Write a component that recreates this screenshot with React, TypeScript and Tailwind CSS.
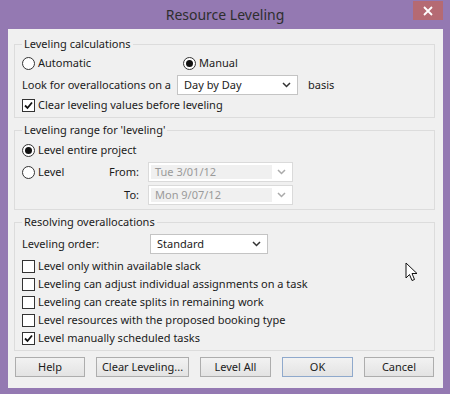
import React from "react"

const font = { fontFamily: '"Noto Sans", "Open Sans", sans-serif' }

const Radio = ({ checked, label }: { checked?: boolean; label: string }) => (
  <div className="flex items-center h-[18px]">
    <span className="w-[13px] h-[13px] rounded-full border border-[#333] bg-white flex items-center justify-center">
      {checked && <span className="w-[7px] h-[7px] rounded-full bg-[#111]" />}
    </span>
    <span className="ml-[3px]">{label}</span>
  </div>
)

const Check = ({ checked, label }: { checked?: boolean; label: string }) => (
  <div className="flex items-center h-[18px]">
    <span className="w-[13px] h-[13px] shrink-0 border border-[#333] bg-white flex items-center justify-center">
      {checked && (
        <svg width="9" height="9" viewBox="0 0 9 9">
          <path d="M1 4.5 L3.5 7 L8 1.5" fill="none" stroke="#111" strokeWidth="1.8" />
        </svg>
      )}
    </span>
    <span className="ml-[3px]">{label}</span>
  </div>
)

const Chevron = ({ color }: { color: string }) => (
  <svg width="9" height="6" viewBox="0 0 9 6">
    <path d="M1 1 L4.5 4.5 L8 1" fill="none" stroke={color} strokeWidth="1.5" />
  </svg>
)

const Select = ({ value, w }: { value: string; w: string }) => (
  <div className={`${w} h-[20px] bg-white border border-[#c4c4c4] flex items-center justify-between pl-[6px] pr-[6px]`}>
    <span>{value}</span>
    <Chevron color="#333" />
  </div>
)

const DateBox = ({ value }: { value: string }) => (
  <div className="w-[145px] h-[20px] bg-white border border-[#dadada] flex items-center p-[2px]">
    <div className="flex-1 h-full bg-[#f0f0f0] text-[#9a9a9a] pl-[4px] flex items-center">{value}</div>
    <div className="w-[18px] flex justify-center">
      <Chevron color="#aaa" />
    </div>
  </div>
)

const Btn = ({ label, w, primary }: { label: string; w: string; primary?: boolean }) => (
  <div
    className={`${w} h-[20px] flex items-center justify-center border bg-gradient-to-b from-[#f2f2f2] to-[#e3e3e3] ${
      primary ? "border-[#8fa9cc]" : "border-[#adadad]"
    }`}
  >
    {label}
  </div>
)

export default function App() {
  return (
    <div className="w-[450px] h-[394px] bg-[#9479b2] relative text-[11px] text-[#1b1b1b] whitespace-nowrap" style={font}>
      <div className="h-[29px] flex items-center justify-center relative">
        <span className="text-[14px] text-[#2e2e2e]">Resource Leveling</span>
        <div className="absolute right-[7px] top-[1px] w-[30px] h-[19px] bg-[#b56a73] flex items-center justify-center">
          <svg width="10" height="10" viewBox="0 0 10 10">
            <path d="M1 1 L9 9 M9 1 L1 9" stroke="#fff" strokeWidth="1.8" />
          </svg>
        </div>
      </div>
      <div className="ml-[8px] mr-[7px] h-[359px] bg-[#f0f0f0] pt-[7px] pl-[6px] pr-[8px] flex flex-col">
        <fieldset className="border border-[#dcdcdc] pl-[7px] pb-[3px]">
          <legend className="px-[2px] leading-[16px]">Leveling calculations</legend>
          <div className="flex mt-[2px]">
            <div className="w-[161px]">
              <Radio label="Automatic" />
            </div>
            <Radio checked label="Manual" />
          </div>
          <div className="flex items-center mt-[3px]">
            <span className="w-[155px]">Look for overallocations on a</span>
            <Select value="Day by Day" w="w-[121px]" />
            <span className="ml-[10px]">basis</span>
          </div>
          <div className="mt-[1px]">
            <Check checked label="Clear leveling values before leveling" />
          </div>
        </fieldset>

        <fieldset className="border border-[#dcdcdc] pl-[7px] pb-[4px] mt-[4px]">
          <legend className="px-[2px] leading-[16px]">Leveling range for 'leveling'</legend>
          <div className="mt-[3px]">
            <Radio checked label="Level entire project" />
          </div>
          <div className="flex items-center mt-[3px]">
            <div className="w-[82px]">
              <Radio label="Level" />
            </div>
            <span className="w-[35px] text-right">From:</span>
            <div className="ml-[9px]">
              <DateBox value="Tue 3/01/12" />
            </div>
          </div>
          <div className="flex items-center mt-[3px]">
            <span className="w-[117px] text-right">To:</span>
            <div className="ml-[9px]">
              <DateBox value="Mon 9/07/12" />
            </div>
          </div>
        </fieldset>

        <fieldset className="border border-[#dcdcdc] pl-[7px] pb-[3px] mt-[4px]">
          <legend className="px-[2px] leading-[16px]">Resolving overallocations</legend>
          <div className="flex items-center mt-[4px] mb-[3px]">
            <span className="w-[128px]">Leveling order:</span>
            <Select value="Standard" w="w-[118px]" />
          </div>
          <Check label="Level only within available slack" />
          <Check label="Leveling can adjust individual assignments on a task" />
          <Check label="Leveling can create splits in remaining work" />
          <Check label="Level resources with the proposed booking type" />
          <Check checked label="Level manually scheduled tasks" />
        </fieldset>

        <div className="flex mt-[6px] pl-[1px] gap-[11px]">
          <Btn label="Help" w="w-[70px]" />
          <Btn label="Clear Leveling..." w="w-[93px]" />
          <Btn label="Level All" w="w-[71px]" />
          <Btn label="OK" w="w-[71px]" primary />
          <Btn label="Cancel" w="w-[70px]" />
        </div>
      </div>
      <svg className="absolute left-[405px] top-[262px]" width="13" height="20" viewBox="0 0 13 20">
        <path d="M1 1 L1 16 L4.5 12.5 L7 18.5 L9.5 17.5 L7 11.5 L12 11.5 Z" fill="#fff" stroke="#111" strokeWidth="1" />
      </svg>
    </div>
  )
}
